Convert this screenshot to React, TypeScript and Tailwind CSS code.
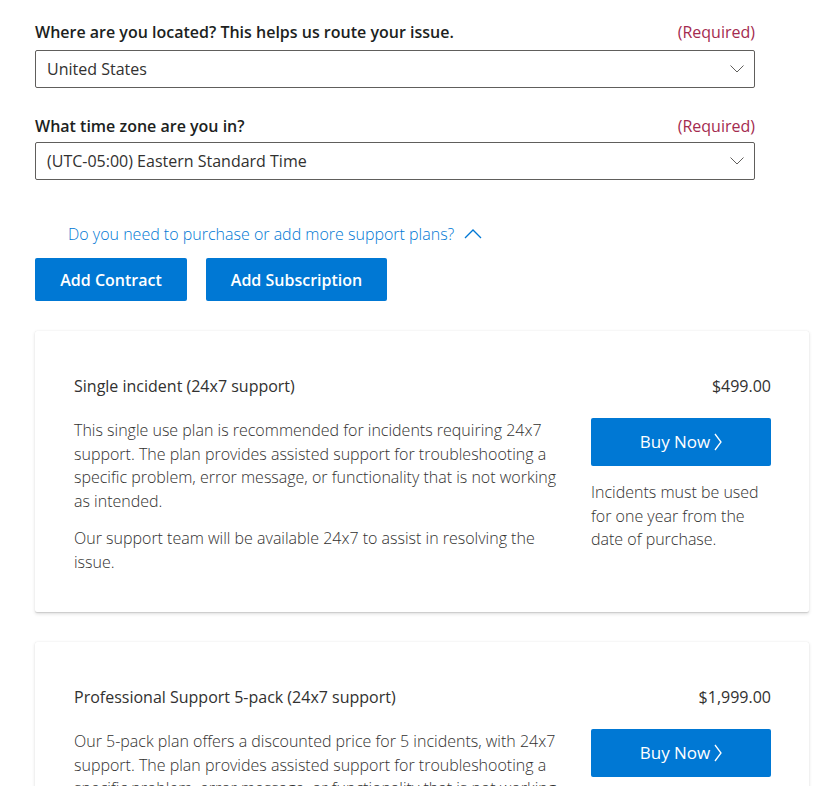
import React from 'react';

const font = { fontFamily: '"Open Sans", "Noto Sans", sans-serif' };

const ChevronDown = () => (
  <svg width="14" height="8" viewBox="0 0 14 8" fill="none">
    <path d="M0.5 0.5 L7 7 L13.5 0.5" stroke="#605e5c" strokeWidth="1" />
  </svg>
);

const ChevronUp = () => (
  <svg width="18" height="10" viewBox="0 0 18 10" fill="none">
    <path d="M1 9 L9 1 L17 9" stroke="#0078d4" strokeWidth="1.3" />
  </svg>
);

const ChevronRight = () => (
  <svg width="8" height="18" viewBox="0 0 8 18" fill="none">
    <path d="M1 1 L7 9 L1 17" stroke="#ffffff" strokeWidth="1.3" />
  </svg>
);

const Field = ({ label, value, gap }: { label: string; value: string; gap: string }) => (
  <div className="w-[720px]">
    <div className={`flex items-center justify-between h-6 ${gap}`}>
      <span className="text-[16px] font-semibold text-[#201f1e]">{label}</span>
      <span className="text-[16px] text-[#a42b4f]">(Required)</span>
    </div>
    <div className="h-[38px] border border-[#605e5c] rounded-[2px] flex items-center justify-between pl-[11px] pr-[10px]">
      <span className="text-[16px] text-[#323130]">{value}</span>
      <ChevronDown />
    </div>
  </div>
);

interface PlanProps {
  title: string;
  price: string;
  paragraphs: string[];
  note?: string;
}

const PlanCard = ({ title, price, paragraphs, note }: PlanProps) => (
  <div className="w-[774px] bg-white rounded-[2px] shadow-[0_1.6px_3.6px_rgba(0,0,0,0.13),0_0.3px_0.9px_rgba(0,0,0,0.11)] pt-[43px] pb-[38px] pl-[39px] pr-[38px]">
    <div className="flex items-center justify-between h-6">
      <span className="text-[16px] font-medium text-[#323130]">{title}</span>
      <span className="text-[16px] font-medium text-[#323130]">{price}</span>
    </div>
    <div className="flex mt-[20px] gap-4">
      <div className="flex-1 pt-[1px] text-[16px] font-light leading-[23.5px] text-[#323130]">
        {paragraphs.map((p, i) => (
          <p key={i} className={i > 0 ? 'mt-[14px]' : ''}>{p}</p>
        ))}
      </div>
      <div className="w-[180px] shrink-0">
        <button className="w-[180px] h-[48px] bg-[#0078d4] rounded-[2px] text-white text-[17px] flex items-center justify-center gap-[4px]">
          <span>Buy Now</span>
          <ChevronRight />
        </button>
        {note && (
          <p className="mt-[15px] text-[16px] font-light leading-[23.5px] text-[#323130]">{note}</p>
        )}
      </div>
    </div>
  </div>
);

export default function App() {
  return (
    <div className="min-h-screen bg-white pt-[20px] pl-[35px]" style={font}>
      <Field label="Where are you located? This helps us route your issue." value="United States" gap="mb-[6px]" />
      <div className="mt-[26px]">
        <Field label="What time zone are you in?" value="(UTC-05:00) Eastern Standard Time" gap="mb-[4px]" />
      </div>

      <div className="mt-[42px] ml-[33px] flex items-center gap-[10px] h-6">
        <span className="text-[16px] font-light text-[#0078d4]">Do you need to purchase or add more support plans?</span>
        <ChevronUp />
      </div>

      <div className="mt-[12px] flex gap-[19px]">
        <button className="w-[152px] h-[43px] bg-[#0078d4] rounded-[2px] text-white text-[16px] font-semibold">Add Contract</button>
        <button className="w-[181px] h-[43px] bg-[#0078d4] rounded-[2px] text-white text-[16px] font-semibold">Add Subscription</button>
      </div>

      <div className="mt-[30px] flex flex-col gap-[30px] pb-10">
        <PlanCard
          title="Single incident (24x7 support)"
          price="$499.00"
          paragraphs={[
            'This single use plan is recommended for incidents requiring 24x7 support. The plan provides assisted support for troubleshooting a specific problem, error message, or functionality that is not working as intended.',
            'Our support team will be available 24x7 to assist in resolving the issue.',
          ]}
          note="Incidents must be used for one year from the date of purchase."
        />
        <PlanCard
          title="Professional Support 5-pack (24x7 support)"
          price="$1,999.00"
          paragraphs={[
            'Our 5-pack plan offers a discounted price for 5 incidents, with 24x7 support. The plan provides assisted support for troubleshooting a specific problem, error message, or functionality that is not working as intended.',
            'Our support team will be available 24x7 to assist in resolving the issue.',
          ]}
          note="Incidents must be used for one year from the date of purchase."
        />
      </div>
    </div>
  );
}
